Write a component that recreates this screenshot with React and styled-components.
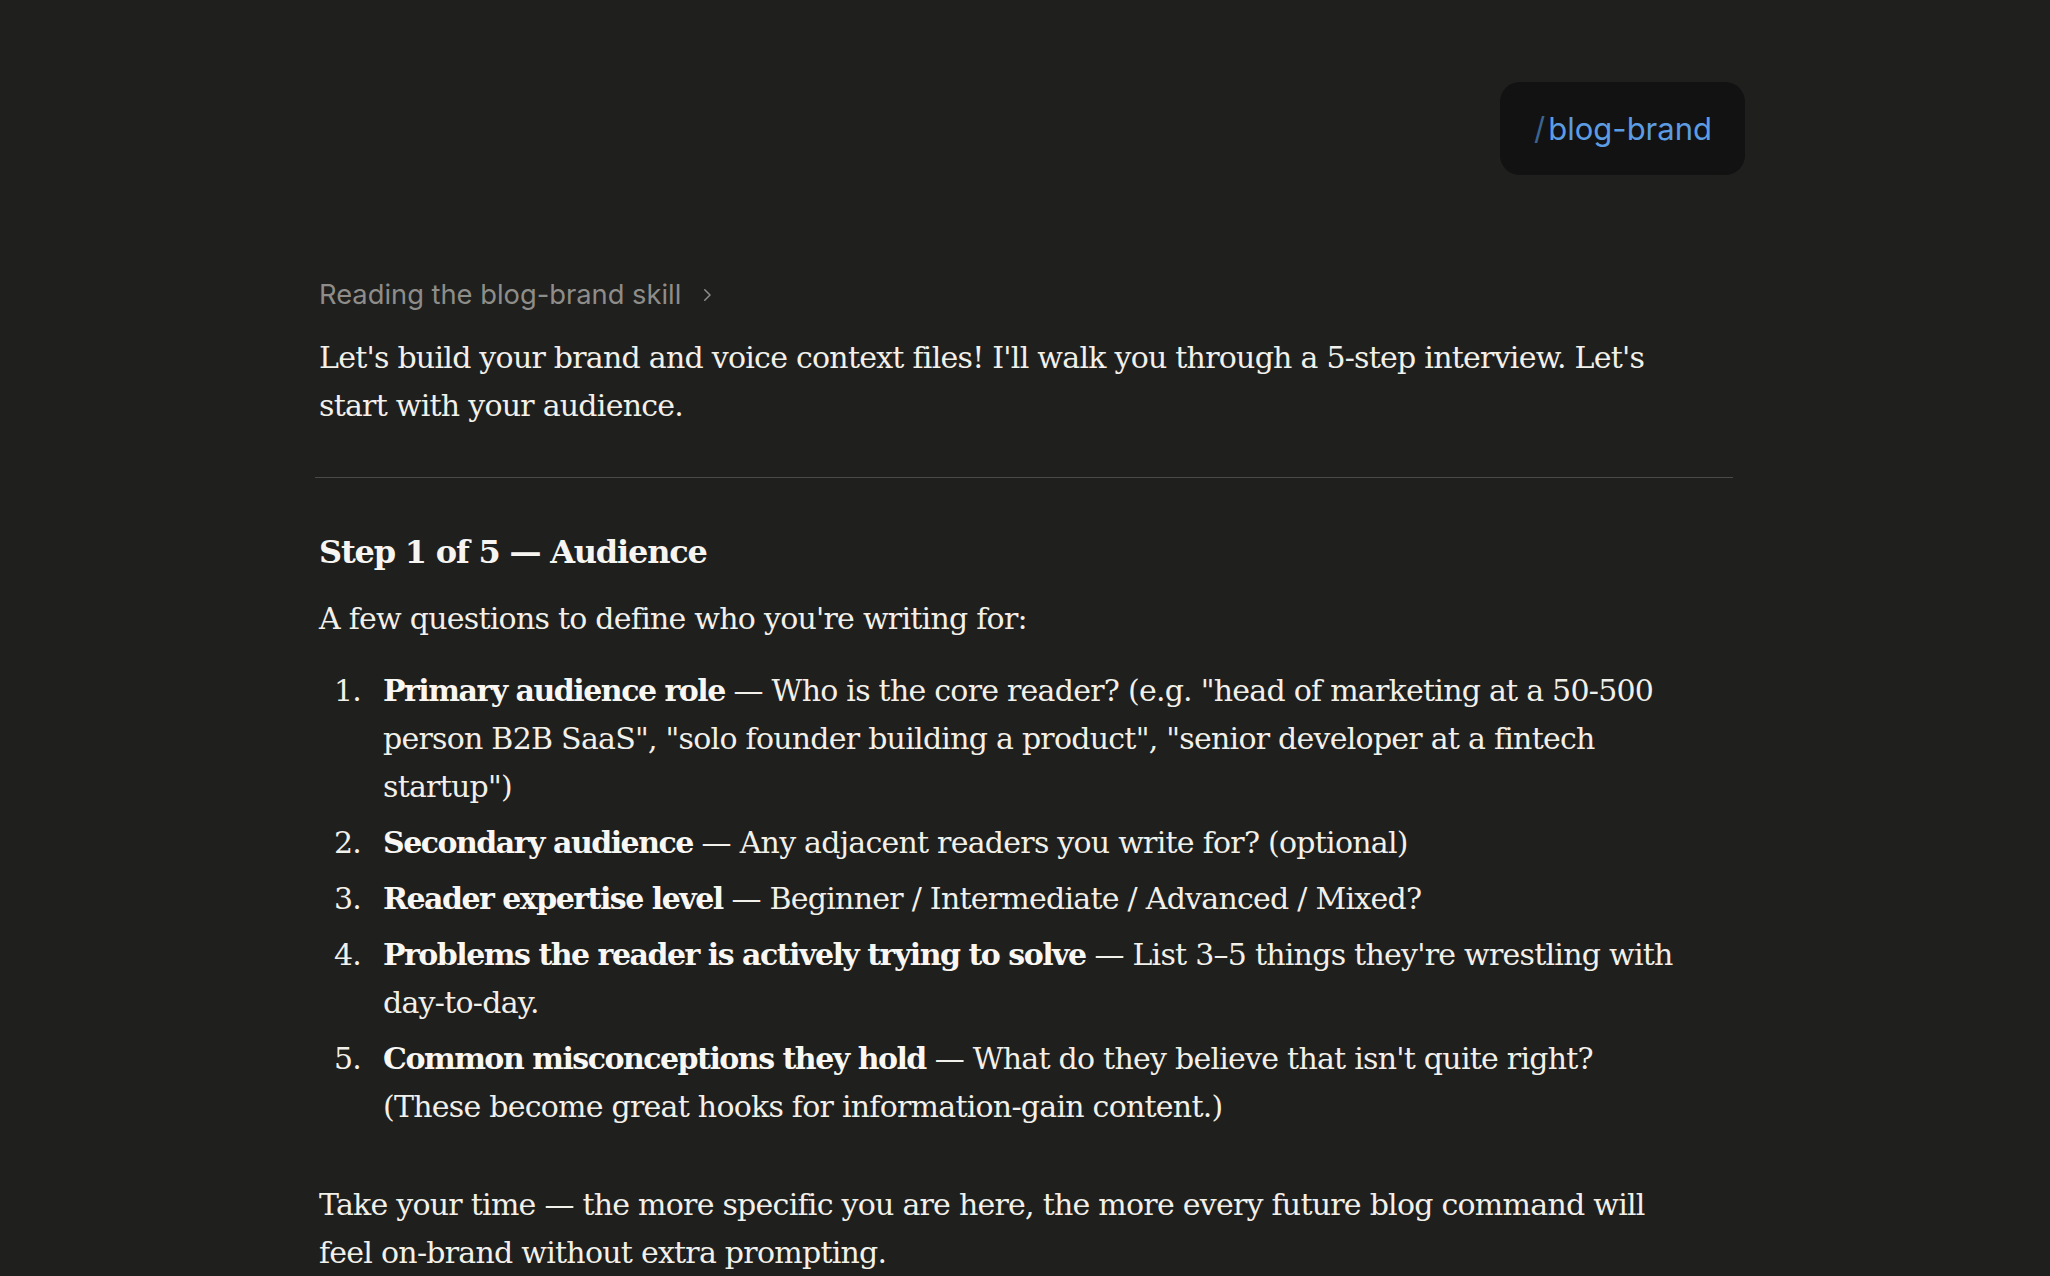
import React from "react";
import styled, { createGlobalStyle } from "styled-components";

const GlobalStyle = createGlobalStyle`
  body {
    margin: 0;
    background: #1f1f1e;
  }
`;

const serif = `"DejaVu Serif", "Liberation Serif", serif`;

const Page = styled.div`
  padding: 82px 0 40px;
`;

const Column = styled.div`
  width: 1416px;
  margin: 0 auto;
`;

const HeaderRow = styled.div`
  display: flex;
  justify-content: flex-end;
  margin-right: -12px;
`;

const CommandPill = styled.div`
  display: flex;
  align-items: center;
  height: 93px;
  padding: 0 33px 0 34px;
  border-radius: 20px;
  background: #121212;
  font-family: Inter, "Liberation Sans", sans-serif;
  font-size: 31px;
  color: #5c9ce2;
`;

const Slash = styled.span`
  color: #3b6490;
  margin-right: 3px;
`;

const Thinking = styled.div`
  display: flex;
  align-items: center;
  gap: 17px;
  margin: 102px 0 0 2px;
  font-family: Inter, "Liberation Sans", sans-serif;
  font-size: 27.3px;
  line-height: 36px;
  color: #8e8d89;
`;

const Chevron = styled.svg`
  width: 18px;
  height: 18px;
`;

const Body = styled.p`
  margin: ${(p) => p.$top || 0}px 0 0 2px;
  max-width: ${(p) => p.$max || 1400}px;
  font-family: ${serif};
  font-size: 30px;
  letter-spacing: -0.75px;
  line-height: 48px;
  color: #f2f0ea;
`;

const Divider = styled.hr`
  margin: 47px 0 0 -2px;
  border: 0;
  border-top: 1px solid #4a4a48;
`;

const Heading = styled.h2`
  margin: 51px 0 0 2px;
  font-family: ${serif};
  font-weight: 700;
  font-size: 32px;
  letter-spacing: -1.2px;
  line-height: 46px;
  color: #f6f5f1;
`;

const List = styled.ol`
  list-style: none;
  margin: 24px 0 0 17px;
  padding: 0;
  font-family: ${serif};
  font-size: 30px;
  letter-spacing: -0.75px;
  line-height: 48px;
  color: #f2f0ea;
`;

const Item = styled.li`
  display: flex;
  margin-bottom: 8px;
`;

const Num = styled.span`
  flex: none;
  width: 49px;
`;

const ItemText = styled.span`
  flex: none;
  width: 1300px;
`;

const Strong = styled.strong`
  font-weight: 700;
  letter-spacing: -1.5px;
  color: #f8f7f3;
`;

const items = [
  {
    title: "Primary audience role",
    text: '— Who is the core reader? (e.g. "head of marketing at a 50-500 person B2B SaaS", "solo founder building a product", "senior developer at a fintech startup")',
  },
  {
    title: "Secondary audience",
    text: "— Any adjacent readers you write for? (optional)",
  },
  {
    title: "Reader expertise level",
    text: "— Beginner / Intermediate / Advanced / Mixed?",
  },
  {
    title: "Problems the reader is actively trying to solve",
    text: "— List 3–5 things they're wrestling with day-to-day.",
  },
  {
    title: "Common misconceptions they hold",
    text: "— What do they believe that isn't quite right? (These become great hooks for information-gain content.)",
  },
];

export default function App() {
  return (
    <>
      <GlobalStyle />
      <Page>
        <Column>
          <HeaderRow>
            <CommandPill>
              <Slash>/</Slash>blog-brand
            </CommandPill>
          </HeaderRow>
          <Thinking>
            Reading the blog-brand skill
            <Chevron viewBox="0 0 24 24" fill="none" stroke="#8e8d89" strokeWidth="2" strokeLinecap="round" strokeLinejoin="round">
              <path d="M9 5l7 7-7 7" />
            </Chevron>
          </Thinking>
          <Body $top={21} $max={1375}>
            Let's build your brand and voice context files! I'll walk you through a 5-step interview. Let's start with your audience.
          </Body>
          <Divider />
          <Heading>Step 1 of 5 — Audience</Heading>
          <Body $top={20}>A few questions to define who you're writing for:</Body>
          <List>
            {items.map((it, i) => (
              <Item key={it.title}>
                <Num>{i + 1}.</Num>
                <ItemText>
                  <Strong>{it.title}</Strong> {it.text}
                </ItemText>
              </Item>
            ))}
          </List>
          <Body $top={50} $max={1375}>
            Take your time — the more specific you are here, the more every future blog command will feel on-brand without extra prompting.
          </Body>
        </Column>
      </Page>
    </>
  );
}
